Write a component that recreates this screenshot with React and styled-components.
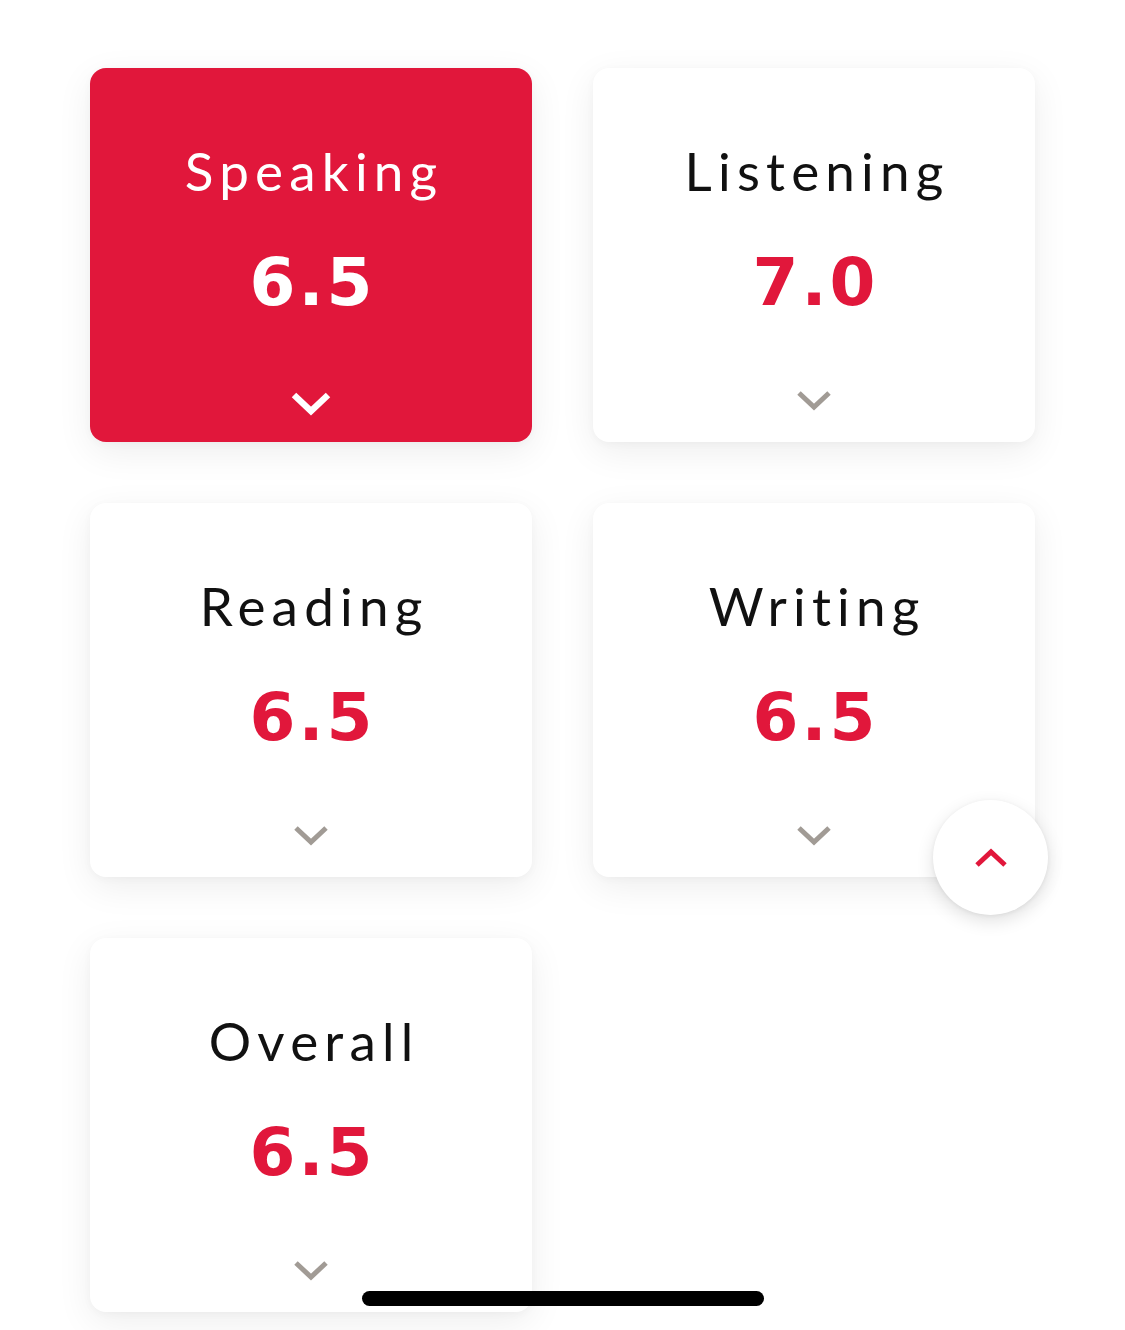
import React from "react";
import styled, { createGlobalStyle } from "styled-components";

const Global = createGlobalStyle`
  html, body {
    margin: 0;
    padding: 0;
    background: #ffffff;
  }
  body {
    font-family: Lato, "Open Sans", sans-serif;
    -webkit-font-smoothing: antialiased;
  }
`;

const RED = "#e1173b";

const Page = styled.div`
  position: relative;
  width: 1125px;
  height: 1330px;
  overflow: hidden;
  background: #ffffff;
  padding: 68px 0 0 90px;
  box-sizing: border-box;
`;

const Grid = styled.div`
  display: grid;
  grid-template-columns: 442px 442px;
  grid-auto-rows: 374px;
  column-gap: 61px;
  row-gap: 61px;
`;

const Card = styled.div`
  position: relative;
  display: flex;
  flex-direction: column;
  align-items: center;
  box-sizing: border-box;
  padding-top: 73px;
  border-radius: 16px;
  background: ${(p) => (p.$active ? RED : "#ffffff")};
  box-shadow: 0 10px 36px rgba(0, 0, 0, 0.07), 0 2px 8px rgba(0, 0, 0, 0.03);
`;

/* trailing letter-spacing is balanced with an equal left padding */
const Label = styled.div`
  font-size: 53px;
  line-height: 60px;
  height: 60px;
  font-weight: 400;
  letter-spacing: 6.2px;
  padding-left: 6.2px;
  color: ${(p) => (p.$active ? "#ffffff" : "#111111")};
`;

const Score = styled.div`
  margin-top: 42px;
  font-family: "DejaVu Sans", Lato, sans-serif;
  font-size: 66px;
  line-height: 80px;
  height: 80px;
  font-weight: 700;
  letter-spacing: 3px;
  padding-left: 3px;
  color: ${(p) => (p.$active ? "#ffffff" : RED)};
`;

const Toggle = styled.svg`
  display: block;
  margin-top: ${(p) => (p.$active ? "66px" : "63px")};
`;

const Fab = styled.button`
  position: absolute;
  right: -13px;
  bottom: -38px;
  width: 115px;
  height: 115px;
  border: none;
  border-radius: 50%;
  background: #ffffff;
  box-shadow: 0 6px 18px rgba(0, 0, 0, 0.12), 0 1px 4px rgba(0, 0, 0, 0.06);
  display: flex;
  align-items: center;
  justify-content: center;
  padding: 0;
  cursor: pointer;
`;

const HomeBar = styled.div`
  position: absolute;
  left: 362px;
  top: 1291px;
  width: 402px;
  height: 15px;
  border-radius: 8px;
  background: #000000;
`;

function Chevron({ active }) {
  return active ? (
    <Toggle $active width="44" height="28" viewBox="0 0 44 28">
      <polyline
        points="5,6 22,22 39,6"
        fill="none"
        stroke="#ffffff"
        strokeWidth="6.5"
        strokeLinejoin="miter"
      />
    </Toggle>
  ) : (
    <Toggle width="44" height="28" viewBox="0 0 44 28">
      <polyline
        points="7,7 22,21 37,7"
        fill="none"
        stroke="#a19b95"
        strokeWidth="5"
        strokeLinejoin="miter"
      />
    </Toggle>
  );
}

const scores = [
  { name: "Speaking", value: "6.5", active: true },
  { name: "Listening", value: "7.0" },
  { name: "Reading", value: "6.5" },
  { name: "Writing", value: "6.5", fab: true },
  { name: "Overall", value: "6.5" },
];

export default function App() {
  return (
    <>
      <Global />
      <Page>
        <Grid>
          {scores.map((s) => (
            <Card key={s.name} $active={s.active}>
              <Label $active={s.active}>{s.name}</Label>
              <Score $active={s.active}>{s.value}</Score>
              <Chevron active={s.active} />
              {s.fab && (
                <Fab aria-label="Scroll to top">
                  <svg width="36" height="24" viewBox="0 0 36 24">
                    <polyline
                      points="4,19 18,6 32,19"
                      fill="none"
                      stroke={RED}
                      strokeWidth="5"
                      strokeLinejoin="miter"
                    />
                  </svg>
                </Fab>
              )}
            </Card>
          ))}
        </Grid>
        <HomeBar />
      </Page>
    </>
  );
}
